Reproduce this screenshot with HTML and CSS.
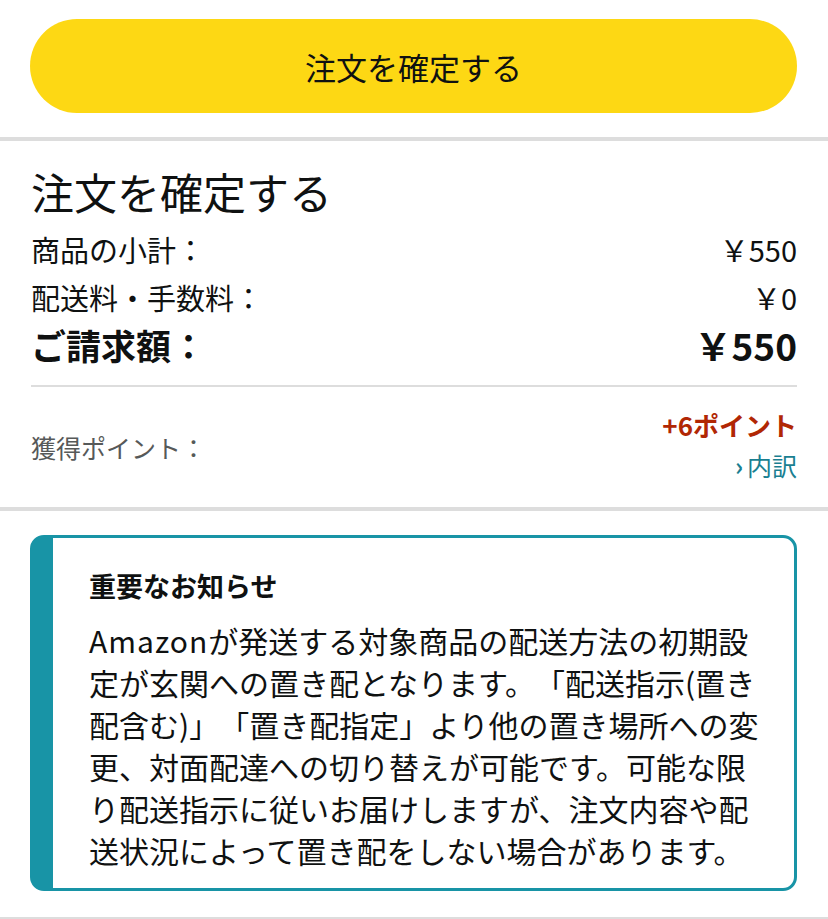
FILE: index.html
```html
<!DOCTYPE html>
<html lang="ja">
<head>
    <meta charset="UTF-8">
    <meta name="viewport" content="width=device-width, initial-scale=1.0">
    <title>注文を確定する</title>
    <link rel="stylesheet" href="styles.css">
</head>
<body>
    <div class="place-order">
        <button type="button" class="order-btn">注文を確定する</button>
    </div>

    <div class="divider-thick"></div>

    <div class="summary">
        <h2>注文を確定する</h2>
        <div class="row">
            <span>商品の小計：</span>
            <span>￥550</span>
        </div>
        <div class="row">
            <span>配送料・手数料：</span>
            <span>￥0</span>
        </div>
        <div class="row total">
            <span>ご請求額：</span>
            <span>￥550</span>
        </div>
        <hr class="rule">
        <div class="points">
            <span class="points-label">獲得ポイント：</span>
            <div class="points-value">
                <div class="points-num">+6ポイント</div>
                <a href="#" class="points-link"><span class="chev">›</span>内訳</a>
            </div>
        </div>
    </div>

    <div class="divider-thick"></div>

    <div class="notice">
        <h3>重要なお知らせ</h3>
        <p><span class="brand">Amazon</span>が発送する対象商品の配送方法の初期設<br>定が玄関への置き配となります。「配送指示(置き<br>配含む)」「置き配指定」より他の置き場所への変<br>更、対面配達への切り替えが可能です。可能な限<br>り配送指示に従いお届けしますが、注文内容や配<br>送状況によって置き配をしない場合があります。</p>
    </div>

    <div class="divider-thick"></div>
</body>
</html>
```

FILE: styles.css
```css
body {
    margin: 0;
    background-color: #fff;
    color: #0f1111;
    font-family: "Noto Sans CJK JP", sans-serif;
    text-spacing-trim: space-all;
}
.place-order {
    padding: 19px 31px 24px 30px;
}
.order-btn {
    display: block;
    width: 100%;
    height: 94px;
    border: none;
    border-radius: 47px;
    background-color: #fdd814;
    color: #0f1111;
    font-family: inherit;
    font-size: 31px;
    cursor: pointer;
}
.divider-thick {
    height: 4px;
    background-color: #dddddd;
}
.summary {
    padding: 25px 31px 0 31px;
}
.summary h2 {
    margin: 0 0 9px 0;
    font-size: 43px;
    font-weight: normal;
    line-height: 50px;
}
.row {
    display: flex;
    justify-content: space-between;
    font-size: 29px;
    line-height: 48px;
}
.row.total {
    font-size: 35px;
    font-weight: bold;
}
.row.total span:last-child {
    font-size: 37px;
}
.rule {
    margin: 16px 0 0 0;
    border: none;
    border-top: 2px solid #dddddd;
}
.points {
    display: flex;
    justify-content: space-between;
    align-items: center;
    padding: 18px 0 18px 0;
}
.points-label {
    color: #565959;
    font-size: 25px;
}
.points-value {
    text-align: right;
    line-height: 40px;
}
.points-num {
    color: #b12704;
    font-size: 26px;
    font-weight: bold;
}
.points-link {
    color: #1a7f91;
    font-size: 25px;
    text-decoration: none;
}
.chev {
    margin-right: 4px;
    font-weight: bold;
}
.notice {
    margin: 24px 31px 26px 30px;
    padding: 30px 10px 17px 36px;
    border: 3px solid #1894a6;
    border-left-width: 23px;
    border-radius: 14px;
}
.notice h3 {
    margin: 0 0 15px 0;
    font-size: 27px;
    font-weight: bold;
    line-height: 36px;
}
.notice p {
    margin: 0;
    font-size: 30px;
    line-height: 42px;
    white-space: nowrap;
}
.brand {
    letter-spacing: 1px;
}
```
